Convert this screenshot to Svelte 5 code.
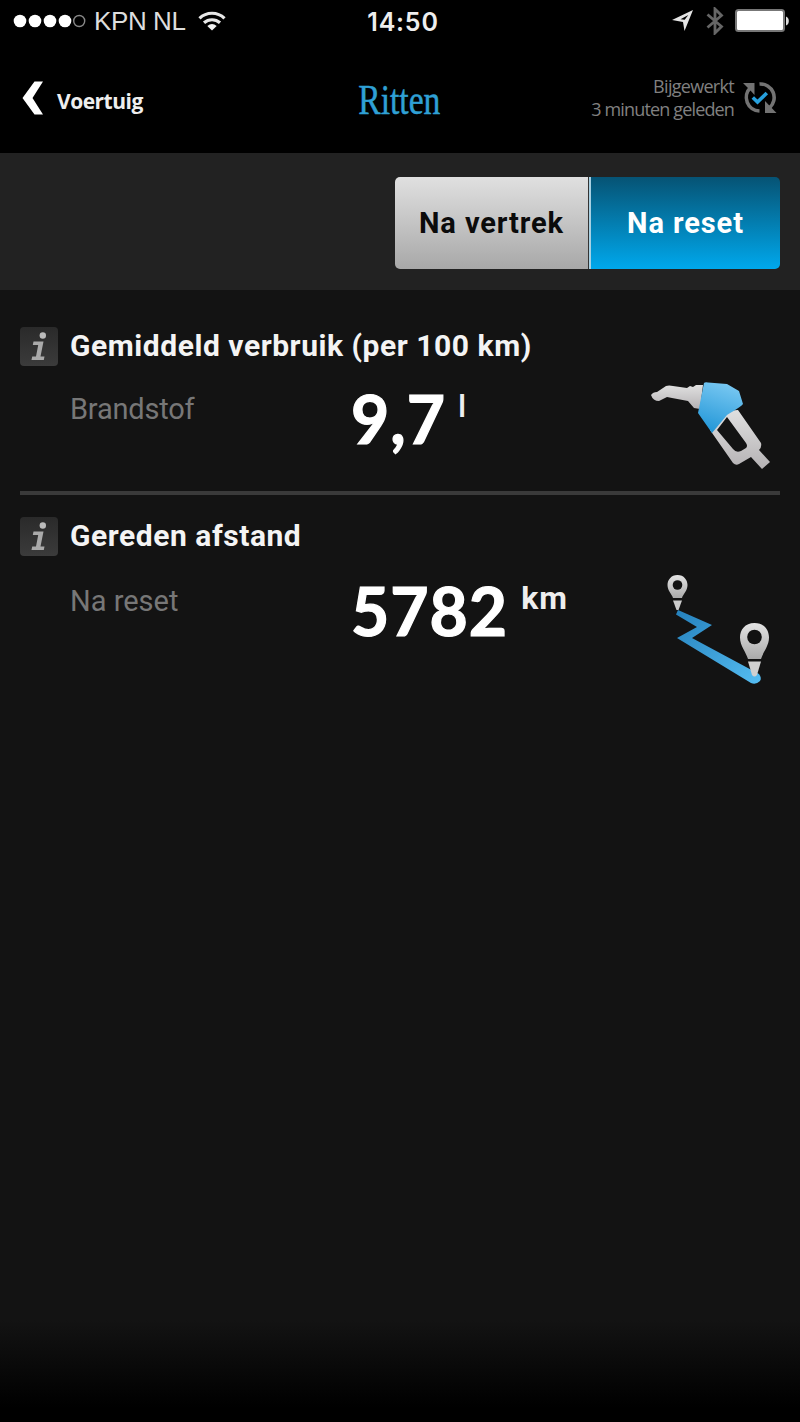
<script lang="ts">
  interface Trip {
    title: string
    label: string
    value: string
    unit: string
    icon: 'pump' | 'route'
  }

  const tabs = ['Na vertrek', 'Na reset']
  let active = $state(1)

  const trips: Trip[] = [
    { title: 'Gemiddeld verbruik (per 100 km)', label: 'Brandstof', value: '9,7', unit: 'l', icon: 'pump' },
    { title: 'Gereden afstand', label: 'Na reset', value: '5782', unit: 'km', icon: 'route' },
  ]
</script>

<div class="screen">
  <div class="status">
    <div class="carrier">
      <svg width="74" height="16" viewBox="0 0 74 16">
        {#each [7, 22, 37, 52] as x}
          <circle cx={x} cy="8" r="6.3" fill="#fff" />
        {/each}
        <circle cx="66.2" cy="8" r="5.5" fill="none" stroke="#888" stroke-width="1.4" />
      </svg>
      <span class="network">KPN NL</span>
      <svg class="wifi" width="28" height="21" viewBox="0 0 28 21">
        <path d="M1.5 7.3A18 18 0 0 1 26.5 7.3M6 11.8A12 12 0 0 1 22 11.8" fill="none" stroke="#e8e8e8" stroke-width="3.2" />
        <path d="M14 19.5L9.3 15Q14 10.8 18.7 15Z" fill="#f2f2f2" />
      </svg>
    </div>
    <span class="time">14:50</span>
    <div class="indicators">
      <svg width="24" height="24" viewBox="0 0 24 24">
        <path d="M1 11L22 1L13.5 22L12 13Z" fill="#e5e5e5" />
        <path d="M9.5 10.3L17.3 6L13.7 10.8Z" fill="#000" />
      </svg>
      <svg width="18" height="28" viewBox="0 0 18 28">
        <path d="M1.5 7.5L15.5 19.5L9 26V2L15.5 8.5L1.5 20.5" fill="none" stroke="#666" stroke-width="2.8" />
      </svg>
      <svg class="battery" width="54" height="24" viewBox="0 0 54 24">
        <rect x="1" y="1" width="48" height="21" rx="2.5" fill="#fff" stroke="#777" stroke-width="2" />
        <path d="M51 7.5Q53.8 8.5 53.8 12T51 16.5Z" fill="#ddd" />
      </svg>
    </div>
  </div>

  <header>
    <button class="back">
      <svg width="22" height="34" viewBox="0 0 22 34">
        <path d="M12.5 .5H21L10.5 17L21 33.5H12.5L.5 17Z" fill="#fff" />
      </svg>
      <span>Voertuig</span>
    </button>
    <h1>Ritten</h1>
    <div class="updated">
      <div class="updated-text">
        <span class="when">Bijgewerkt</span>
        <span class="ago">3 minuten geleden</span>
      </div>
      <svg width="34" height="34" viewBox="0 0 34 34">
        <g fill="none" stroke="#737373" stroke-width="3.6">
          <path d="M7.5 6.6A13.6 13.6 0 0 0 16.5 30" />
          <path d="M16.5 3A13.6 13.6 0 0 1 26.5 26.8" />
        </g>
        <path d="M0 2H11.5V14L7.5 9.5Z" fill="#737373" />
        <path d="M22 20V32H33.5Z" fill="#737373" />
        <path d="M9.8 16.5L14.5 21L23.8 12" fill="none" stroke="#269fdc" stroke-width="3.6" />
      </svg>
    </div>
  </header>

  <nav>
    <div class="tabs">
      {#each tabs as tab, i}
        <button class="tab" class:active={active === i} onclick={() => (active = i)}>
          <span>{tab}</span>
        </button>
      {/each}
    </div>
  </nav>

  <main>
    {#each trips as trip}
      <section>
        <div class="info">
          <svg width="38" height="39" viewBox="0 0 38 39">
            <circle cx="22.8" cy="8.5" r="3.2" fill="#bbb" />
            <path d="M13.5 14.5H23.5L20.5 29.5H24.5L23.8 33H11.5L12.2 29.5H16L18.2 18H12.8Z" fill="#aaa" />
          </svg>
        </div>
        <h2>{trip.title}</h2>
        <p class="label {trip.icon}">{trip.label}</p>
        <p class="value">{trip.value}<sup class={trip.icon}>{trip.unit}</sup></p>
        <div class="picture {trip.icon}">
          {#if trip.icon === 'pump'}
            <svg width="122" height="90" viewBox="0 0 122 90">
              <defs>
                <linearGradient id="steel" x1="0" y1="0" x2="0" y2="1">
                  <stop offset="0" stop-color="#e0e0e0" />
                  <stop offset="1" stop-color="#b5b2b4" />
                </linearGradient>
                <linearGradient id="grip" x1="0.6" y1="0" x2="0.3" y2="1">
                  <stop offset="0" stop-color="#79c8f2" />
                  <stop offset="1" stop-color="#2196d7" />
                </linearGradient>
              </defs>
              <path d="M1 14Q3 11 7 11L16 5Q19 4 23 5L37 7L40 5L43 6L46 4L53 4L50 28L44 27L38 20L22 17L17 16L9 20Q3 20 1 14Z" fill="url(#steel)" />
              <path d="M60 49L75 30L88 29L111 62Q112 66 109 69L120 81L112 88L101 76L89 83Q86 85 83 82ZM67 49L83 68Q86 72 91 70L96 67Q98 65 96 62L77 36Z" fill="url(#steel)" fill-rule="evenodd" />
              <path d="M54 2Q55 1 58 1.5L77 3L89 10L93 23Q92 25 77 34L62 52L48 32Z" fill="url(#grip)" />
            </svg>
          {:else}
            <svg width="110" height="116" viewBox="0 0 110 116">
              <defs>
                <linearGradient id="pin" x1="0" y1="0" x2="0" y2="1">
                  <stop offset="0" stop-color="#e4e4e4" />
                  <stop offset="1" stop-color="#aaa" />
                </linearGradient>
                <linearGradient id="road" x1="0" y1="0" x2="1" y2="1">
                  <stop offset="0" stop-color="#2581bd" />
                  <stop offset="1" stop-color="#55bdf2" />
                </linearGradient>
              </defs>
              <path d="M18 37L52 52L32 65L99 101Q102 105 100 108Q96 112 91 110L17 65L37 54L16 41.5Z" fill="url(#road)" />
              <path d="M17.5 2C11 2 7.5 7 7.5 12C7.5 18 12 21 13 25H22C23 21 27.5 18 27.5 12C27.5 7 24 2 17.5 2Z" fill="url(#pin)" />
              <circle cx="17.5" cy="12" r="4.8" fill="#111" />
              <path d="M13 27.5H22L18.5 37H16.5Z" fill="#ccc" />
              <path d="M94.5 50C85 50 80 57 80 64.5C80 73 86 79 88 86H101C103 79 109 73 109 64.5C109 57 104 50 94.5 50Z" fill="url(#pin)" />
              <circle cx="94.5" cy="64" r="7.3" fill="#111" />
              <path d="M88 88.5H101L97 102Q94.5 105 92 102Z" fill="#d0d0d0" />
            </svg>
          {/if}
        </div>
      </section>
    {/each}
  </main>
</div>

<style>
  :global(body) { background: #000; }
  .screen {
    width: 800px;
    height: 1422px;
    overflow: hidden;
    display: flex;
    flex-direction: column;
    background: #000;
    color: #fff;
    font-family: Roboto, 'Liberation Sans', sans-serif;
  }
  .screen * { box-sizing: border-box; }
  svg { display: block; flex: none; }
  button { border: 0; padding: 0; background: none; color: inherit; font: inherit; cursor: pointer; }
  h1, h2, p { margin: 0; font-weight: inherit; white-space: nowrap; }

  .status {
    height: 42px;
    padding: 0 11px 0 13px;
    display: grid;
    grid-template-columns: 1fr auto 1fr;
    align-items: center;
  }
  .carrier { display: flex; align-items: center; }
  .network { font: 26px/42px 'Liberation Sans', sans-serif; color: #ddd; margin-left: 7px; letter-spacing: -0.4px; }
  .wifi { margin-left: 12px; }
  .time { font: 600 25px/40px Inter, sans-serif; color: #eee; letter-spacing: 0.8px; padding: 1px 0 0 4px; }
  .indicators { display: flex; align-items: center; justify-content: flex-end; gap: 11px; }

  header {
    height: 111px;
    padding: 0 23px 0 22px;
    display: grid;
    grid-template-columns: 1fr auto 1fr;
    align-items: center;
  }
  .back { display: flex; align-items: center; gap: 13px; font: 700 21px/30px 'Open Sans', sans-serif; color: #eee; letter-spacing: -0.5px; }
  .back span { padding-top: 6px; }
  h1 { font: 42px/50px 'Liberation Serif', serif; color: #2fa0d5; -webkit-text-stroke: 0.5px; transform: scaleX(0.8); margin: 4px -10px 0; }
  .updated { display: flex; align-items: center; justify-content: flex-end; gap: 9px; }
  .updated-text { display: flex; flex-direction: column; align-items: flex-end; font: 18px/23px 'Open Sans', sans-serif; color: #808080; }
  .when { letter-spacing: -0.7px; }
  .ago { letter-spacing: -0.85px; }

  nav {
    height: 137px;
    padding: 24px 20px 0;
    display: flex;
    justify-content: flex-end;
    align-items: flex-start;
    background: #222;
  }
  .tabs { width: 385px; height: 92px; display: flex; border-radius: 5px; overflow: hidden; }
  .tab {
    width: 194px;
    font-size: 29px;
    font-weight: 700;
    letter-spacing: 0.9px;
    color: #0b0b0b;
    background: linear-gradient(#e0e0e0, #a8a8a8);
    border-right: 1px solid #333;
  }
  .tab.active {
    width: 191px;
    color: #fff;
    background: linear-gradient(#065374, #00a8ec);
    border-left: 2px solid #a8d0e2;
    border-right: 0;
  }

  main {
    flex: 1;
    padding: 0 20px;
    background: linear-gradient(#131313 0, #131313 1030px, #000 1118px);
  }
  section {
    height: 191px;
    padding-top: 22px;
    display: grid;
    grid-template-columns: 50px 281px 1fr 150px;
    grid-template-rows: 66px 1fr;
  }
  section:first-child { height: 205px; padding-top: 37px; border-bottom: 4px solid #3a3a3a; grid-template-rows: 64px 1fr; }
  .info { width: 38px; height: 39px; border-radius: 4px; background: linear-gradient(#2a2a2a, #3b3b3b); }
  h2 { grid-column: 2 / 5; font-size: 30px; font-weight: 700; line-height: 38px; letter-spacing: 0.55px; color: #f4f4f4; }
  .label { grid-column: 2; font-size: 29px; line-height: 36px; color: #777; }
  .label.pump { letter-spacing: -0.2px; }
  .value { margin-top: -12px; font: 700 66px/80px Lato, sans-serif; letter-spacing: 1px; -webkit-text-stroke: 1.2px; }
  sup { font: 700 32px/30px Roboto, sans-serif; letter-spacing: 1px; vertical-align: 27px; margin-left: 13px; color: #eee; -webkit-text-stroke: 0; }
  sup.pump { font-weight: 500; margin-left: 12px; }
  .picture { display: flex; justify-content: flex-end; align-items: flex-start; padding: 0 8px 0 0; }
  .picture.route { padding-right: 10px; }
  .picture svg { margin-top: -10px; }
</style>
